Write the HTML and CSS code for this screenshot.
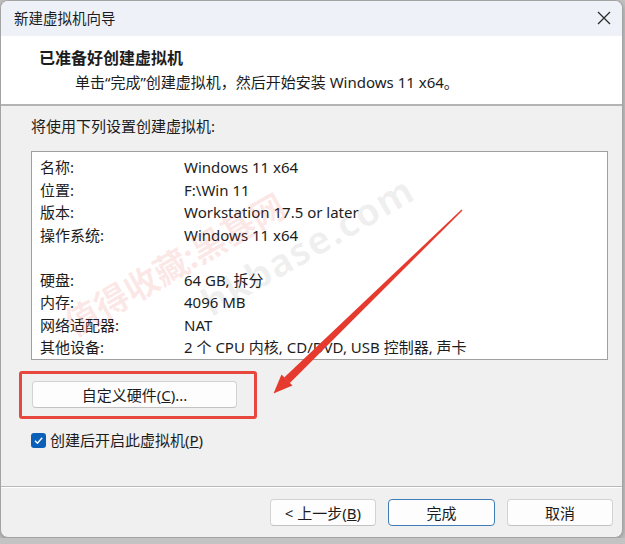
FILE: index.html
```html
<!DOCTYPE html>
<html lang="zh-CN">
<head>
    <meta charset="UTF-8">
    <meta name="viewport" content="width=device-width, initial-scale=1.0">
    <title>新建虚拟机向导</title>
    <link rel="stylesheet" href="styles.css">
</head>
<body>

<div class="window">
    <div class="titlebar">
        <span class="title">新建虚拟机向导</span>
        <span class="close">
            <svg width="14" height="14" viewBox="0 0 14 14"><path d="M1 1L13 13M13 1L1 13" stroke="#2b2b2b" stroke-width="1.3" fill="none"/></svg>
        </span>
    </div>

    <div class="header">
        <h1>已准备好创建虚拟机</h1>
        <p>单击“完成”创建虚拟机，然后开始安装 Windows 11 x64。</p>
    </div>

    <div class="content">
        <p class="intro">将使用下列设置创建虚拟机:</p>

        <div class="summary">
            <div class="row"><span class="key">名称:</span><span>Windows 11 x64</span></div>
            <div class="row"><span class="key">位置:</span><span>F:\Win 11</span></div>
            <div class="row"><span class="key">版本:</span><span>Workstation 17.5 or later</span></div>
            <div class="row"><span class="key">操作系统:</span><span>Windows 11 x64</span></div>
            <div class="row"></div>
            <div class="row"><span class="key">硬盘:</span><span>64 GB, 拆分</span></div>
            <div class="row"><span class="key">内存:</span><span>4096 MB</span></div>
            <div class="row"><span class="key">网络适配器:</span><span>NAT</span></div>
            <div class="row"><span class="key">其他设备:</span><span>2 个 CPU 内核, CD/DVD, USB 控制器, 声卡</span></div>
        </div>

        <div class="highlight">
            <button class="btn custom">自定义硬件(<u>C</u>)...</button>
        </div>

        <label class="check">
            <span class="box">
                <svg width="11" height="11" viewBox="0 0 11 11"><path d="M2 5.8L4.4 8.2L9.2 2.8" stroke="#fff" stroke-width="1.4" fill="none"/></svg>
            </span>
            <span>创建后开启此虚拟机(<u>P</u>)</span>
        </label>
    </div>

    <div class="footer">
        <button class="btn">&lt; 上一步(<u>B</u>)</button>
        <button class="btn primary">完成</button>
        <button class="btn">取消</button>
    </div>

    <!-- watermark from the screenshot -->
    <div class="mark mark-cn">值得收藏:黑基网</div>
    <div class="mark mark-en">hkbase.com</div>

    <!-- red annotation arrow -->
    <svg class="arrow" width="625" height="544" viewBox="0 0 625 544">
        <polygon points="461.5,209.5 462.5,210.5 289.6,383.2 284.2,377.6" fill="#e63a2e"/>
        <polygon points="273.5,393.5 281.5,374.5 292.5,385.5" fill="#e63a2e"/>
    </svg>
</div>

</body>
</html>
```

FILE: styles.css
```css
html {
    background: #c3c3c3;
}
body {
    margin: 0;
    font-family: "Noto Sans", "Noto Sans CJK SC", sans-serif;
    font-size: 15px;
    color: #1c1c1c;
}
.window {
    position: relative;
    width: 623px;
    height: 538px;
    box-sizing: border-box;
    border: 1px solid #a3a3a3;
    border-radius: 8px;
    background: #f0f0f0;
    overflow: hidden;
    box-shadow: 0 2px 6px rgba(0, 0, 0, 0.25);
}
.titlebar {
    height: 35px;
    display: flex;
    align-items: center;
    justify-content: space-between;
    padding: 0 11px 0 13px;
    background: #eef2f8;
}
.title {
    font-size: 14.5px;
    margin-top: -3px;
}
.close {
    display: flex;
    margin-top: -2px;
}
.header {
    height: 70px;
    box-sizing: border-box;
    padding: 11px 0 0 38px;
    background: #fff;
    border-bottom: 2px solid #b4b4b4;
}
.header h1 {
    margin: 0;
    font-size: 16px;
    line-height: 22px;
    font-weight: bold;
}
.header p {
    margin: 2px 0 0 36px;
    line-height: 22px;
}
.content {
    height: 380px;
    box-sizing: border-box;
    padding: 10px 14px 0 30px;
}
.intro {
    margin: 0;
    line-height: 20px;
}
.summary {
    margin-top: 15px;
    height: 209px;
    box-sizing: border-box;
    padding: 4px 0 0 8px;
    background: #fff;
    border: 1px solid #a0a0a0;
}
.row {
    display: flex;
    height: 22.5px;
    line-height: 22.5px;
}
.key {
    width: 144px;
}
.highlight {
    margin: 11px 0 0 -12px;
    width: 238px;
    height: 48px;
    box-sizing: border-box;
    padding: 7px 0 0 10px;
    border: 3px solid #e8473d;
    border-radius: 3px;
}
.btn {
    height: 27px;
    padding: 0;
    font-family: inherit;
    font-size: 15px;
    color: #1c1c1c;
    background: #fdfdfd;
    border: 1px solid #d2d2d2;
    border-bottom-color: #c2c2c2;
    border-radius: 4px;
}
.custom {
    width: 205px;
}
.check {
    display: flex;
    align-items: center;
    gap: 4px;
    margin-top: 11px;
    line-height: 20px;
}
.box {
    width: 15px;
    height: 15px;
    border-radius: 3px;
    background: #0a60b8;
    display: flex;
    align-items: center;
    justify-content: center;
}
.footer {
    display: flex;
    justify-content: flex-end;
    gap: 12px;
    padding: 12px 9px 0 0;
    border-top: 1px solid #b9b9b9;
    box-shadow: inset 0 1px 0 #fff;
}
.footer .btn {
    width: 106px;
}
.footer .primary {
    width: 107px;
    border: 1px solid #3f7cb8;
}
.mark {
    position: absolute;
    font-weight: bold;
    white-space: nowrap;
    transform: translate(-50%, -50%) rotate(-30deg);
    pointer-events: none;
}
.mark-cn {
    left: 173px;
    top: 262px;
    font-size: 34px;
    color: rgba(235, 70, 70, 0.12);
}
.mark-en {
    left: 306px;
    top: 244px;
    font-size: 38px;
    letter-spacing: 1px;
    color: rgba(0, 0, 0, 0.06);
}
.arrow {
    position: absolute;
    left: -1px;
    top: -1px;
    pointer-events: none;
}
```
